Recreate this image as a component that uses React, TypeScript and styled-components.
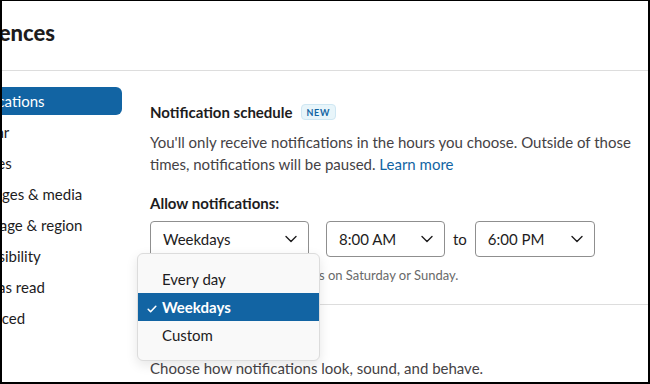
import styled, { createGlobalStyle } from 'styled-components';

const GlobalStyle = createGlobalStyle`
  html, body {
    margin: 0;
    padding: 0;
    background: #fff;
  }
  body {
    font-family: Lato, "Noto Sans", sans-serif;
    color: #1d1c1d;
  }
  * {
    box-sizing: border-box;
  }
`;

const sideItems = [
  'Notifications',
  'Sidebar',
  'Themes',
  'Messages & media',
  'Language & region',
  'Accessibility',
  'Mark as read',
  'Advanced',
];

const dayOptions = ['Every day', 'Weekdays', 'Custom'];

const Chevron = () => (
  <svg width="12" height="8" viewBox="0 0 12 8">
    <path d="M1 1.5l5 5 5-5" fill="none" stroke="#1d1c1d" strokeWidth="1.4" strokeLinecap="round" strokeLinejoin="round" />
  </svg>
);

const CheckMark = () => (
  <svg width="10" height="8" viewBox="0 0 10 8">
    <path d="M1.2 4.3l2.4 2.4L8.8 1.3" fill="none" stroke="#fff" strokeWidth="1.6" strokeLinecap="round" strokeLinejoin="round" />
  </svg>
);

const App = () => {
  return (
    <>
      <GlobalStyle />
      <Frame>
        <Modal>
          <Header>
            <Title>Preferences</Title>
          </Header>
          <Body>
            <Sidebar>
              {sideItems.map((item, i) => (
                <SideItem key={item} $active={i === 0}>
                  {item}
                </SideItem>
              ))}
            </Sidebar>
            <Content>
              <Section>
                <HeadingRow>
                  <Heading>Notification schedule</Heading>
                  <Badge>NEW</Badge>
                </HeadingRow>
                <Text>
                  You'll only receive notifications in the hours you choose. Outside of those times,
                  notifications will be paused. <LinkText href="#">Learn more</LinkText>
                </Text>
                <Label>Allow notifications:</Label>
                <SelectRow>
                  <SelectWrap>
                    <Select $width={159}>
                      <span>Weekdays</span>
                      <Chevron />
                    </Select>
                    <Menu>
                      {dayOptions.map((opt) => (
                        <Option key={opt} $selected={opt === 'Weekdays'}>
                          {opt === 'Weekdays' && (
                            <CheckSlot>
                              <CheckMark />
                            </CheckSlot>
                          )}
                          {opt}
                        </Option>
                      ))}
                    </Menu>
                  </SelectWrap>
                  <Select $width={119}>
                    <span>8:00 AM</span>
                    <Chevron />
                  </Select>
                  <To>to</To>
                  <Select $width={120}>
                    <span>6:00 PM</span>
                    <Chevron />
                  </Select>
                </SelectRow>
                <Hint>You won't receive notifications on Saturday or Sunday.</Hint>
              </Section>
              <Section $last>
                <Heading>Sound &amp; appearance</Heading>
                <Text>Choose how notifications look, sound, and behave.</Text>
              </Section>
            </Content>
          </Body>
        </Modal>
      </Frame>
    </>
  );
};

const Frame = styled.div`
  width: 650px;
  height: 384px;
  overflow: hidden;
  position: relative;
  background: #fff;
  border-style: solid;
  border-color: #000;
  border-width: 1px 2px 2px 2px;
`;

const Modal = styled.div`
  margin-left: -70px;
  width: 716px;
`;

const Header = styled.div`
  height: 70px;
  display: flex;
  align-items: center;
  padding: 0 0 6px 6px;
  border-bottom: 1px solid #dddddd;
`;

const Title = styled.h1`
  margin: 0;
  font-size: 22px;
  font-weight: 900;
  line-height: 1;
`;

const Body = styled.div`
  display: flex;
`;

const Sidebar = styled.nav`
  flex: 0 0 190px;
  padding: 16px 0 0 12px;
  display: flex;
  flex-direction: column;
  gap: 3px;
`;

const SideItem = styled.div<{ $active?: boolean }>`
  height: 28px;
  line-height: 28px;
  padding-left: 16px;
  border-radius: 6px;
  font-size: 15px;
  white-space: nowrap;
  background: ${(p) => (p.$active ? '#1264a3' : 'transparent')};
  color: ${(p) => (p.$active ? '#fff' : '#1d1c1d')};
`;

const Content = styled.div`
  flex: 1;
  padding-left: 28px;
`;

const Section = styled.section<{ $last?: boolean }>`
  padding: ${(p) => (p.$last ? '22px 0 0' : '30px 0 20px')};
  border-bottom: ${(p) => (p.$last ? 'none' : '1px solid #dddddd')};
`;

const HeadingRow = styled.div`
  display: flex;
  align-items: center;
  gap: 8px;
`;

const Heading = styled.div`
  font-size: 15px;
  font-weight: 700;
  line-height: 22px;
`;

const Badge = styled.span`
  height: 16px;
  padding: 0 5px;
  display: inline-flex;
  align-items: center;
  font-size: 9px;
  font-weight: 700;
  letter-spacing: 0.6px;
  color: #1264a3;
  background: #e8f5fa;
  border: 1px solid #cfe7f3;
  border-radius: 4px;
`;

const Text = styled.p`
  margin: 8px 0 0;
  width: 496px;
  font-size: 15px;
  line-height: 22px;
  color: #454245;
`;

const LinkText = styled.a`
  color: #1264a3;
  text-decoration: none;
`;

const Label = styled.div`
  margin-top: 17px;
  font-size: 15px;
  font-weight: 700;
  line-height: 22px;
`;

const SelectRow = styled.div`
  margin-top: 7px;
  display: flex;
  align-items: center;
`;

const SelectWrap = styled.div`
  position: relative;
  margin-right: 17px;
`;

const Select = styled.div<{ $width: number }>`
  width: ${(p) => p.$width}px;
  height: 36px;
  padding: 0 11px 0 12px;
  display: flex;
  align-items: center;
  justify-content: space-between;
  border: 1px solid #8f8f8f;
  border-radius: 4px;
  font-size: 15px;
  color: #1d1c1d;
`;

const To = styled.span`
  margin: 0 8px;
  font-size: 15px;
  color: #1d1c1d;
`;

const Menu = styled.div`
  position: absolute;
  left: -13px;
  top: 32px;
  width: 183px;
  padding: 11px 0;
  background: #f9f9f9;
  border: 1px solid #dcdcdc;
  border-radius: 6px;
  box-shadow: 0 4px 12px rgba(0, 0, 0, 0.1);
  z-index: 10;
`;

const Option = styled.div<{ $selected?: boolean }>`
  height: 28px;
  line-height: 28px;
  padding-left: 24px;
  font-size: 15px;
  font-weight: ${(p) => (p.$selected ? 700 : 400)};
  background: ${(p) => (p.$selected ? '#1264a3' : 'transparent')};
  color: ${(p) => (p.$selected ? '#fff' : '#1d1c1d')};
`;

const CheckSlot = styled.span`
  display: inline-block;
  width: 15px;
  margin-left: -15px;
`;

const Hint = styled.div`
  margin-top: 9px;
  font-size: 13px;
  line-height: 18px;
  color: #696969;
`;

export default App;
